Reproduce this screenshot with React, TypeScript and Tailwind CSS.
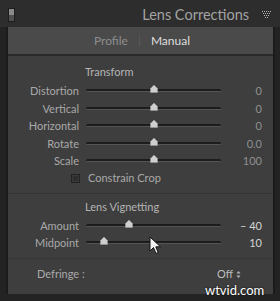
const font = { fontFamily: "Lato, 'Liberation Sans', sans-serif" };

type Row = { label: string; value: string; pos: number; bright?: boolean };

const transformRows: Row[] = [
  { label: "Distortion", value: "0", pos: 50 },
  { label: "Vertical", value: "0", pos: 50 },
  { label: "Horizontal", value: "0", pos: 50 },
  { label: "Rotate", value: "0.0", pos: 50 },
  { label: "Scale", value: "100", pos: 50 },
];

const vignetteRows: Row[] = [
  { label: "Amount", value: "– 40", pos: 32, bright: true },
  { label: "Midpoint", value: "10", pos: 13, bright: true },
];

const SliderRow = ({ row }: { row: Row }) => (
  <div className="flex items-center h-[17.5px]">
    <div className="w-[71px] text-right text-[11px] text-[#a9a9a9] leading-none">
      {row.label}
    </div>
    <div className="relative ml-[7px] w-[135px] h-[3px] rounded-full bg-[#1c1c1c] border-b border-[#555]">
      <svg
        className="absolute top-[-5px]"
        style={{ left: `calc(${row.pos}% - 4px)` }}
        width="8"
        height="9"
        viewBox="0 0 8 9"
      >
        <path d="M0.5 8.5 V4.5 L4 1 L7.5 4.5 V8.5 Z" fill="#cfcfcf" stroke="#9a9a9a" strokeWidth="0.6" />
      </svg>
    </div>
    <div
      className={`w-[41px] text-right text-[11px] leading-none ${row.bright ? "text-[#d6d6d6]" : "text-[#8f8f8f]"}`}
    >
      {row.value}
    </div>
  </div>
);

export default function App() {
  return (
    <div className="relative w-[280px] h-[301px] bg-[#232323] overflow-hidden" style={font}>
      {/* header */}
      <div className="h-[27px] flex items-center bg-[#2d2d2d] pl-[8px] pr-[9px]">
        <div className="mt-[2px] w-[7px] h-[14px] border border-[#1c1c1c] flex flex-col">
          <div className="flex-1 bg-[#8a8a8a]" />
          <div className="flex-1 bg-[#505050]" />
        </div>
        <div className="mt-[3px] flex-1 text-right text-[14.5px] text-[#a3a3a3] pr-[13px] leading-none">
          Lens Corrections
        </div>
        <svg className="mt-[3px]" width="9" height="8" viewBox="0 0 9 8">
          {[0, 1, 2, 3].map((r) =>
            Array.from({ length: 5 - r }, (_, c) => (
              <rect key={`${r}-${c}`} x={r + c * 2} y={r * 2} width="1" height="1" fill="#b5b5b5" />
            ))
          )}
        </svg>
      </div>

      {/* panel */}
      <div className="ml-[6px] mr-[5px] border-x-2 border-[#1b1b1b]">
        <div className="h-[29px] bg-[#4a4a4a] border-b-2 border-[#2a2a2a] flex items-center justify-center gap-[11px] text-[12px] pl-[3px]">
          <span className="text-[#8d8d8d]">Profile</span>
          <span className="w-px h-[11px] bg-[#575757]" />
          <span className="text-[#dedede]">Manual</span>
        </div>

        <div className="bg-[#3e3e3e] h-[238px] pt-[9px]">
          <div className="h-[14px] leading-[14px] pl-[77px] text-[11px] text-[#b4b4b4] mb-[3px]">Transform</div>
          {transformRows.map((r) => (
            <SliderRow key={r.label} row={r} />
          ))}
          <div className="flex items-center h-[17px] pl-[63px]">
            <div className="w-[9px] h-[9px] bg-[#2e2e2e] border border-[#222] shadow-[inset_0_0_0_1px_#3a3a3a]" />
            <span className="ml-[8px] text-[11px] text-[#a9a9a9]">Constrain Crop</span>
          </div>
          <div className="mt-[6px] h-px bg-[#353535]" />
          <div className="mt-[6px] h-[14px] leading-[14px] pl-[77px] text-[11px] text-[#b4b4b4] mb-[3px]">
            Lens Vignetting
          </div>
          {vignetteRows.map((r) => (
            <SliderRow key={r.label} row={r} />
          ))}
          <div className="mt-[6px] h-px bg-[#363636]" />
          <div className="mt-[6px] h-[20px] flex items-center pl-[29px] pr-[32px] text-[11px] text-[#a9a9a9]">
            <span className="flex-1">Defringe :</span>
            <span className="text-[#bdbdbd]">Off</span>
            <svg className="ml-[3px]" width="5" height="9" viewBox="0 0 5 9">
              <path d="M0.5 3.5 L2.5 1 L4.5 3.5 Z M0.5 5.5 L2.5 8 L4.5 5.5 Z" fill="#b5b5b5" />
            </svg>
          </div>
        </div>
      </div>

      {/* cursor */}
      <svg className="absolute left-[149px] top-[236px]" width="13" height="19" viewBox="0 0 13 19">
        <path d="M1 1 L1 15 L4.5 11.5 L7 17.5 L9.2 16.5 L6.8 10.8 L11.5 10.8 Z" fill="#f2f2f2" stroke="#111" strokeWidth="1" />
      </svg>

      {/* watermark */}
      <div className="absolute left-[205px] top-[284px] text-[13px] text-white leading-none [text-shadow:0_0_2px_#000]">
        wtvid.com
      </div>
    </div>
  );
}
